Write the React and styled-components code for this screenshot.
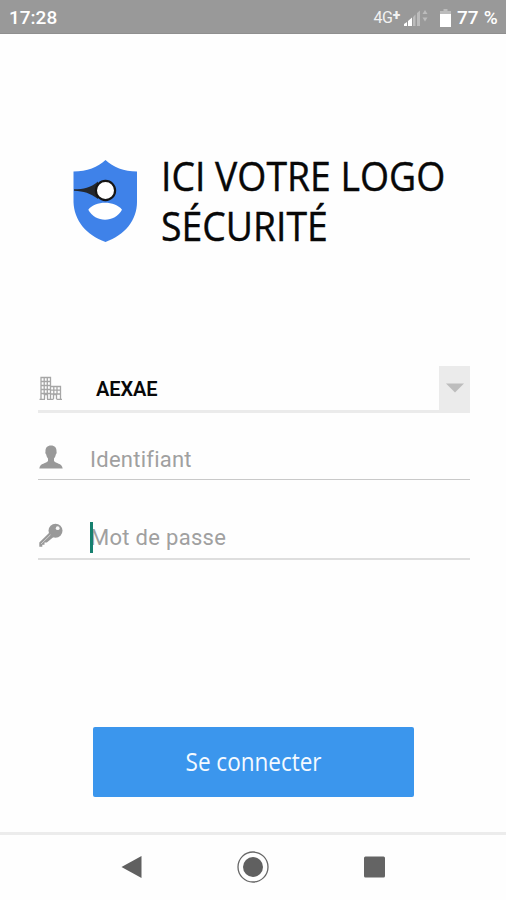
import React from "react";
import styled, { createGlobalStyle } from "styled-components";

const GlobalStyle = createGlobalStyle`
  * { box-sizing: border-box; }
  body { margin: 0; background: #fefefe; }
`;

const Screen = styled.div`
  width: 506px;
  height: 900px;
  display: flex;
  flex-direction: column;
  background: #fefefe;
  font-family: Roboto, sans-serif;
  overflow: hidden;
`;

const StatusBar = styled.header`
  height: 34px;
  flex: none;
  display: flex;
  align-items: center;
  justify-content: space-between;
  padding: 3px 8px 0 9px;
  background: #999;
  border-bottom: 1px solid #8f8f8f;
  color: #fff;
`;

const StatusText = styled.span`
  font-size: ${(p) => p.$size || 19}px;
  font-weight: ${(p) => p.$weight || 500};
  line-height: 30px;
  letter-spacing: ${(p) => p.$spacing || 0}px;
  white-space: pre;
`;

const StatusGroup = styled.div`
  display: flex;
  align-items: center;
`;

const Network = styled(StatusText)`
  opacity: 0.88;
  margin-right: 4px;
  sup { font-size: 14px; font-weight: 900; line-height: 0; vertical-align: 3px; }
`;

const SignalIcon = styled.svg`
  margin: 0 11px 0 0;
`;

const BatteryIcon = styled.svg`
  margin-right: 6px;
`;

const Brand = styled.section`
  height: 332px;
  flex: none;
  display: flex;
  align-items: flex-start;
  padding: 126px 0 0 73px;
`;

const BrandName = styled.h1`
  margin: -10px 0 0 24px;
  font: 400 41px/50px "Open Sans", sans-serif;
  color: #080808;
  white-space: nowrap;
  -webkit-text-stroke: 0.4px #080808;
  transform: scaleX(${(p) => p.$stretch});
  transform-origin: left;
`;

const Form = styled.div`
  width: 432px;
  margin-left: 38px;
  height: 361px;
  flex: none;
`;

const Field = styled.div`
  height: ${(p) => p.$height}px;
  display: flex;
  align-items: flex-end;
  border-bottom: ${(p) => p.$line}px solid ${(p) => p.$lineColor};
`;

const IconSlot = styled.span`
  width: 52px;
  display: flex;
  padding-bottom: ${(p) => p.$lift}px;
`;

const Value = styled.span`
  flex: 1;
  padding-left: 6px;
  padding-bottom: 9px;
  font-size: 20px;
  line-height: 24px;
  font-weight: 600;
  letter-spacing: -0.1px;
  color: #080808;
`;

const Placeholder = styled.span`
  position: relative;
  padding-bottom: ${(p) => p.$lift}px;
  font-size: 22px;
  line-height: 28px;
  letter-spacing: ${(p) => p.$spacing}px;
  color: #a0a0a0;
`;

const Caret = styled.i`
  position: absolute;
  left: 0;
  top: -2px;
  width: 3px;
  height: 31px;
  background: #16806f;
`;

const DropButton = styled.button`
  width: 31px;
  height: 46px;
  margin-bottom: -2px;
  padding: 0 0 2px;
  border: 0;
  background: #ebebeb;
  display: flex;
  align-items: center;
  justify-content: center;
`;

const SubmitButton = styled.button`
  width: 321px;
  height: 70px;
  margin-left: 93px;
  padding: 0 0 3px;
  flex: none;
  border: 0;
  border-radius: 2px;
  background: #3b96ed;
  color: #f5faff;
  font: 400 25px/34px "Open Sans", sans-serif;
`;

const ButtonLabel = styled.span`
  display: inline-block;
  transform: scaleX(${(p) => p.$stretch});
`;

const NavBar = styled.nav`
  margin-top: 35px;
  height: 68px;
  flex: none;
  border-top: 3px solid #ececec;
  display: flex;
  align-items: center;
  justify-content: space-between;
  padding: 0 121px 2px 120px;
`;

function Shield() {
  return (
    <svg width="64" height="83" viewBox="0 0 64 83">
      <path d="M32.500 0C25 7 14 11.500 0.500 11.500V42C1 60 13 75 32.500 82C52 75 64 60 64 42V11.500C51 11.500 40 7 32.500 0Z" fill="#3f82e9" />
      <path d="M1 29.300C11 29.300 17 28 25 21.500V39C17 33 11 31.500 1 30.800Z" fill="#24272c" />
      <circle cx="32.500" cy="30.500" r="9.600" fill="#fff" stroke="#151515" strokeWidth="2.200" />
      <path d="M15.300 49.700C22 40.500 42 40.500 49 49.700C42 63 22 63 15.300 49.700Z" fill="#fff" />
    </svg>
  );
}

function Building() {
  return (
    <svg width="24" height="25" viewBox="0 0 24 25" fill="none" stroke="#a6a6a6" strokeWidth="1.300">
      <path d="M3 23V1.500H12.500V23M6.200 1.500V19M9.300 1.500V19M3 5.500H12.500M3 9.500H12.500M3 13.500H12.500M3 17.500H12.500M6.500 23V18.500H9.500V23M1.500 23.300H7M9 23.300H15.500M18.500 23.300H24" />
      <path d="M12.500 10.500H22.500V23M15.800 10.500V18M19 10.500V18M13 14.200H22.500M13 18H22.500M15.500 23V18.500H18.500V23" />
    </svg>
  );
}

function Person() {
  return (
    <svg width="26" height="24" viewBox="0 0 26 24" fill="#999">
      <path d="M13 0.500C9.300 0.500 7.300 2.800 7.500 6.500C7.200 7 7.300 8.800 8.200 9.500C8.500 11.500 9.300 12.700 10 13.500V16C8.500 18.500 2 18 1.300 23.500H24.700C24 18 17.500 18.500 16 16V13.500C16.700 12.700 17.500 11.500 17.800 9.500C18.700 8.800 18.800 7 18.500 6.500C18.700 2.800 16.700 0.500 13 0.500Z" />
    </svg>
  );
}

function Key() {
  return (
    <svg width="25" height="25" viewBox="0 0 25 25">
      <path d="M11.500 9.500L1.300 19.500V23.700H4.300V21.700H6.500V19.500H8.800L15.500 14Z" fill="#999" />
      <circle cx="17.500" cy="7.700" r="7" fill="#999" />
      <circle cx="19.700" cy="5.200" r="1.900" fill="#f7f7f7" />
      <path d="M3 21L12.500 11.800" stroke="#d0d0d0" strokeWidth="1" />
    </svg>
  );
}

export default function App() {
  return (
    <>
      <GlobalStyle />
      <Screen>
        <StatusBar>
          <StatusText>17:28</StatusText>
          <StatusGroup>
            <Network $size={16} $weight={400} $spacing={-0.3}>4G<sup>+</sup></Network>
            <SignalIcon width="25" height="18" viewBox="0 0 25 18">
              <path d="M0 17V15L3 13V17ZM4 17V12L8 8.500V17Z" fill="#fff" />
              <path d="M9 8L11.500 5.500V17H9ZM13 4L16 1.500V17H13Z" fill="#bcbcbc" />
              <path d="M18.500 5L21 1L23.500 5ZM18.500 8.500L21 12.500L23.500 8.500Z" fill="#bcbcbc" />
            </SignalIcon>
            <BatteryIcon width="11" height="19" viewBox="0 0 11 19">
              <path d="M3.500 0H7.500V2H11V5H0V2H3.500Z" fill="#bcbcbc" />
              <path d="M0 5H11V18H0Z" fill="#fff" />
            </BatteryIcon>
            <StatusText $spacing={0.2}>77 %</StatusText>
          </StatusGroup>
        </StatusBar>

        <Brand>
          <Shield />
          <BrandName $stretch={0.911}>ICI VOTRE LOGO<br />SÉCURITÉ</BrandName>
        </Brand>

        <Form>
          <Field $height={47} $line={3} $lineColor="#ebebeb">
            <IconSlot $lift={9}><Building /></IconSlot>
            <Value>AEXAE</Value>
            <DropButton aria-label="AEXAE">
              <svg width="18" height="10" viewBox="0 0 18 10"><path d="M0 0.500H18L9 9.500Z" fill="#bdbdbd" /></svg>
            </DropButton>
          </Field>
          <Field $height={67} $line={1.5} $lineColor="#c9c9c9">
            <IconSlot $lift={10}><Person /></IconSlot>
            <Placeholder $lift={5} $spacing={0.25}>Identifiant</Placeholder>
          </Field>
          <Field $height={80} $line={2} $lineColor="#dedede">
            <IconSlot $lift={10}><Key /></IconSlot>
            <Placeholder $lift={6} $spacing={0.3}>Mot de passe<Caret /></Placeholder>
          </Field>
        </Form>

        <SubmitButton><ButtonLabel $stretch={0.9}>Se connecter</ButtonLabel></SubmitButton>

        <NavBar>
          <svg width="22" height="24" viewBox="0 0 22 24"><path d="M21.500 1V23L1.500 12Z" fill="#606060" /></svg>
          <svg width="32" height="32" viewBox="0 0 32 32">
            <circle cx="16" cy="16" r="15" fill="none" stroke="#666" strokeWidth="1.300" />
            <circle cx="16" cy="16" r="10" fill="#606060" />
          </svg>
          <svg width="21" height="22" viewBox="0 0 21 22"><rect y="0.500" width="21" height="21" rx="1.500" fill="#646464" /></svg>
        </NavBar>
      </Screen>
    </>
  );
}
